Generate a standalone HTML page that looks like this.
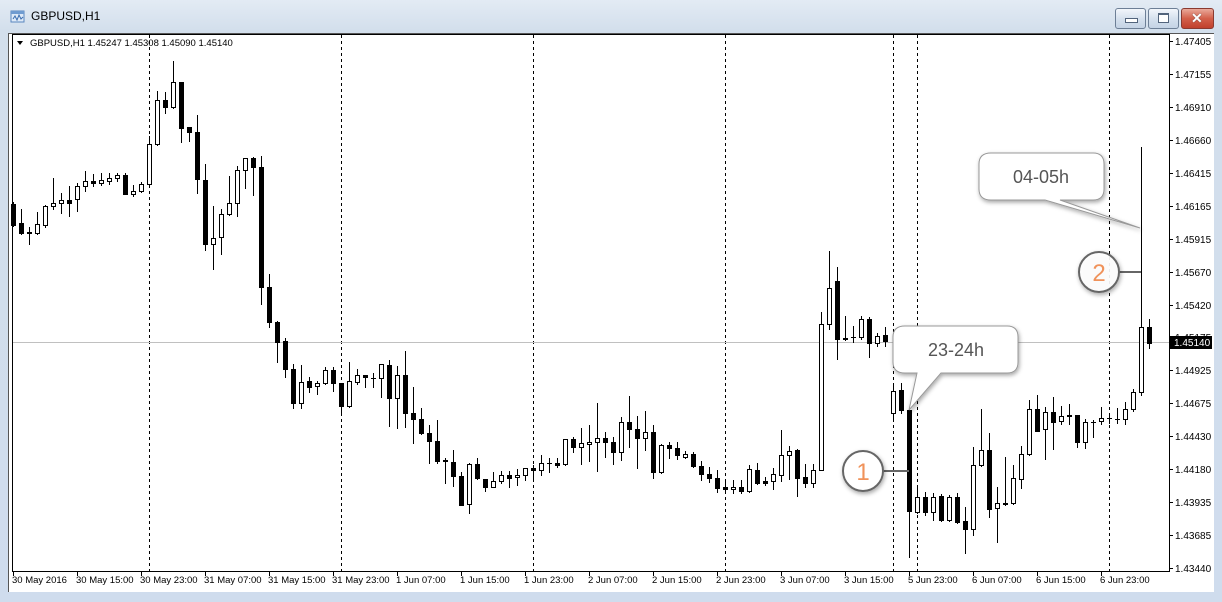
<!DOCTYPE html>
<html><head><meta charset="utf-8">
<style>
html,body{margin:0;padding:0;width:1222px;height:602px;overflow:hidden;background:#c4d6ea;font-family:"Liberation Sans",sans-serif}
#win{position:absolute;left:0;top:0;width:1222px;height:602px;background:linear-gradient(#e3ebf4,#d3dfec 30px,#cfdced);}
#title{position:absolute;left:31px;top:9px;font-size:12px;color:#000}
#client{position:absolute;left:8px;top:33px;width:1206px;height:559px;background:#fff;border-left:1px solid #555;border-top:1px solid #555;box-sizing:border-box}
.btn{position:absolute;top:8px;height:19px;border:1px solid #6d7f96;border-radius:3px;background:linear-gradient(#f2f6fb,#d6e1ee 50%,#c4d3e5)}
</style></head><body>
<div id="win">
<svg style="position:absolute;left:10px;top:9px" width="16" height="16" viewBox="0 0 16 16">
<rect x="1" y="2" width="13" height="11" fill="#dfeaf7" stroke="#5a87bf"/>
<rect x="1" y="2" width="13" height="3" fill="#6f9bd0"/>
<path d="M3 10 L5 7 L7 11 L9 6 L11 10 L13 8" stroke="#3a6db0" fill="none"/>
</svg>
<div id="title">GBPUSD,H1</div>
<div class="btn" style="left:1115px;width:29px"><div style="position:absolute;left:9px;top:9px;width:11px;height:3px;background:#fff;border:1px solid #52647c"></div></div>
<div class="btn" style="left:1148px;width:29px"><div style="position:absolute;left:9px;top:4px;width:9px;height:7px;border:1px solid #52647c;border-top-width:2px;background:#fff"></div></div>
<div class="btn" style="left:1181px;width:31px;border-color:#8a3a30;background:linear-gradient(#e9a99a,#d3604a 50%,#c0402c)"><div style="position:absolute;left:9px;top:1px;color:#fff;font-weight:bold;font-size:14px;text-shadow:0 0 1px #333">✕</div></div>
<div id="client"></div>
<svg id="chart" style="position:absolute;left:0;top:0" width="1222" height="602" xmlns="http://www.w3.org/2000/svg" font-family="Liberation Sans, sans-serif">
<defs>
<filter id="sh" x="-20%" y="-20%" width="140%" height="160%"><feDropShadow dx="1" dy="2" stdDeviation="2" flood-color="#000" flood-opacity="0.35"/></filter>
</defs>
<g id="grid"></g>
<line x1="12" y1="342.5" x2="1169" y2="342.5" stroke="#c0c0c0"/>
<g id="candles"></g>
<rect x="12.5" y="34.5" width="1157" height="537" fill="none" stroke="#000"/>
<g id="axis" font-size="10" fill="#000"></g>
<text x="30" y="46" font-size="9.5">GBPUSD,H1  1.45247 1.45308 1.45090 1.45140</text>
<path d="M17 41 L23 41 L20 45 Z" fill="#000"/>
<rect x="1170" y="336" width="42" height="13" fill="#000"/>
<text x="1174" y="346" font-size="10" fill="#fff">1.45140</text>
<!-- callout 04-05h -->
<g filter="url(#sh)">
<path d="M991 153 H1093 Q1104 153 1104 164 V189 Q1104 200 1093 200 H1060 L1140 228 L1045 200 H991 Q979 200 979 189 V164 Q979 153 991 153 Z" fill="#fff" stroke="#999" stroke-width="1"/>
</g>
<text x="1041" y="183" font-size="18" fill="#555" text-anchor="middle">04-05h</text>
<!-- callout 23-24h -->
<g filter="url(#sh)">
<path d="M905 326 H1007 Q1018 326 1018 337 V362 Q1018 373 1007 373 H941 L909 410 L917 373 H905 Q893 373 893 362 V337 Q893 326 905 326 Z" fill="#fff" stroke="#999" stroke-width="1"/>
</g>
<text x="956" y="356" font-size="18" fill="#555" text-anchor="middle">23-24h</text>
<!-- circles -->
<line x1="883" y1="471" x2="909" y2="471" stroke="#666" stroke-width="2"/>
<g filter="url(#sh)"><circle cx="863" cy="471" r="20" fill="#fff" stroke="#666" stroke-width="2"/></g>
<text x="863" y="480" font-size="24" fill="#f0925a" text-anchor="middle">1</text>
<line x1="1119" y1="272" x2="1141" y2="272" stroke="#666" stroke-width="2"/>
<g filter="url(#sh)"><circle cx="1099" cy="272" r="20" fill="#fff" stroke="#666" stroke-width="2" fill-opacity="0.9"/></g>
<text x="1099" y="281" font-size="24" fill="#f0925a" text-anchor="middle">2</text>
</svg>
</div>
<script>
var NS="http://www.w3.org/2000/svg";
function el(p,t,a){var e=document.createElementNS(NS,t);for(var k in a)e.setAttribute(k,a[k]);p.appendChild(e);return e;}
var D=[[202,226,204,225],[209,234,223,233],[227,244,232,233],[212,234,233,224],[205,227,225,206],[178,209,206,203],[193,213,203,200],[186,216,200,203],[183,211,199,186],[171,191,186,181],[174,186,181,183],[173,185,183,180],[173,184,181,178],[173,181,178,175],[173,194,175,194],
[185,196,194,191],[182,192,191,184],[136,185,184,144],[91,145,144,100],[92,113,100,107],[61,108,107,82],[82,142,82,128],[127,141,127,132],[115,193,132,179],[164,250,180,244],[206,269,244,238],[209,254,237,214],[176,215,214,203],[166,216,203,170],[158,188,170,158],[157,195,158,167],[156,304,167,287],[274,327,287,322],[321,362,322,342],[338,377,341,369],[364,408,369,403],[365,408,403,382],[377,392,381,387],[381,394,386,383],[367,384,383,370],[367,391,370,383],[383,415,383,406],
[362,407,406,381],[369,384,382,375],[375,387,375,377],[373,387,378,378],[364,397,378,364],[360,426,365,398],[366,428,398,375],[351,427,375,413],[387,443,413,419],[408,434,419,433],[425,463,433,441],[420,463,441,461],[458,483,460,461],[450,486,462,476],[472,505,476,505],[463,513,504,464],[458,479,464,478],[479,491,479,487],[472,487,487,481],[471,483,481,475],[471,487,475,478],[469,485,477,475],[468,480,475,468],[465,480,468,470],[455,475,470,463],[458,472,463,463],[458,467,463,465],
[439,465,464,439],[437,452,439,447],[428,464,447,443],[425,461,444,442],[403,471,442,438],[432,457,438,442],[437,464,442,452],[417,460,452,422],[396,447,422,429],[416,468,429,438],[411,450,438,432],[425,478,432,472],[444,473,472,445],[442,458,445,448],[442,459,448,455],[451,458,457,454],[452,467,454,466],[461,480,466,474],[467,482,474,478],[470,492,478,488],[482,493,487,489],[480,493,489,487],[480,493,487,491],[465,492,491,469],[463,484,470,483],[477,485,481,483],
[468,489,481,474],[430,481,475,455],[446,479,455,451],[449,496,450,478],[464,487,477,483],[464,487,483,470],[312,470,470,324],[251,329,324,288],[267,359,281,339],[316,340,339,338],[326,342,337,337],[316,339,337,319],[317,357,319,343],[333,346,343,336],[327,346,335,341],[383,420,413,391],[383,413,390,410],[408,557,410,511],
[488,513,512,497],[492,515,497,512],[493,520,512,497],[494,521,496,520],[495,521,520,497],[493,523,497,522],[507,553,521,529],[447,535,529,465],[409,466,465,450],[433,517,450,509],[487,542,508,503],[457,505,504,503],[465,504,503,478],[446,488,479,454],[400,455,454,409],[395,431,409,431],[407,459,429,412],[397,449,412,422],[406,424,421,416],[404,424,415,416],[415,447,415,442],[419,448,442,422],[420,437,422,422],[407,424,421,418],[415,423,418,418],[408,423,419,419],[402,424,419,409],[389,411,409,392],[147,395,392,327],[319,348,327,343]];
var g=document.getElementById("candles");
D.forEach(function(c,i){var x=13+8*i;var h=c[0],l=c[1],o=c[2],cl=c[3];
el(g,"line",{x1:x+.5,x2:x+.5,y1:h,y2:l+1,stroke:"#000"});
if(o==cl){el(g,"line",{x1:x-2,x2:x+3,y1:o+.5,y2:o+.5,stroke:"#000"});}
else if(cl<o){el(g,"rect",{x:x-1.5,y:cl+.5,width:4,height:Math.max(1,o-cl),fill:"#fff",stroke:"#000"});}
else{el(g,"rect",{x:x-2,y:o,width:5,height:Math.max(2,cl-o+1),fill:"#000"});}
});
var gr=document.getElementById("grid");
[149,341,533,725,893,917,1109].forEach(function(x){el(gr,"line",{x1:x+.5,x2:x+.5,y1:35,y2:571,stroke:"#000","stroke-dasharray":"3,3"});});
var ax=document.getElementById("axis");
var P=["1.47405","1.47155","1.46910","1.46660","1.46415","1.46165","1.45915","1.45670","1.45420","1.45175","1.44925","1.44675","1.44430","1.44180","1.43935","1.43685","1.43440"];
P.forEach(function(p,k){var y=Math.round(41+k*32.94);el(ax,"line",{x1:1170,x2:1173,y1:y+.5,y2:y+.5,stroke:"#000"});var t=el(ax,"text",{x:1175,y:y+4});t.textContent=p;});
var T=["30 May 2016","30 May 15:00","30 May 23:00","31 May 07:00","31 May 15:00","31 May 23:00","1 Jun 07:00","1 Jun 15:00","1 Jun 23:00","2 Jun 07:00","2 Jun 15:00","2 Jun 23:00","3 Jun 07:00","3 Jun 15:00","5 Jun 23:00","6 Jun 07:00","6 Jun 15:00","6 Jun 23:00"];
T.forEach(function(s,k){var x=13+64*k;el(ax,"line",{x1:x+.5,x2:x+.5,y1:572,y2:576,stroke:"#000"});var t=el(ax,"text",{x:x-1,y:583,"font-size":"9.5"});t.textContent=s;});
</script>
</body></html>
